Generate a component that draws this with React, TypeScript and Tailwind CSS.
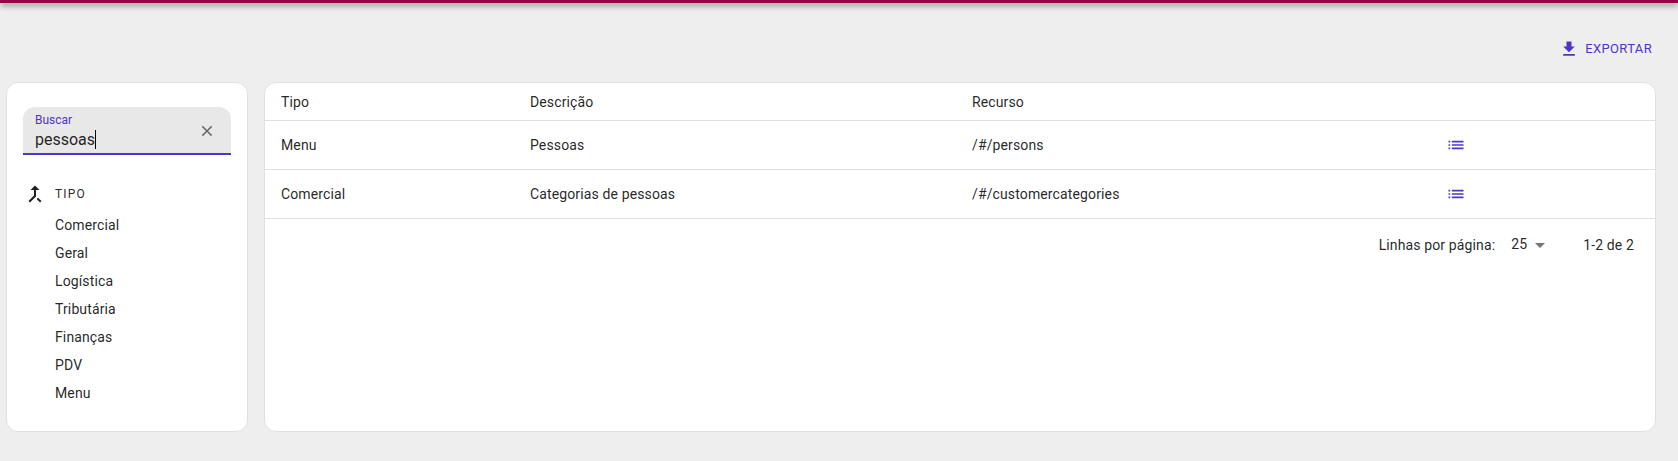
const categories = ['Comercial', 'Geral', 'Logística', 'Tributária', 'Finanças', 'PDV', 'Menu'];

const rows = [
  { tipo: 'Menu', descricao: 'Pessoas', recurso: '/#/persons' },
  { tipo: 'Comercial', descricao: 'Categorias de pessoas', recurso: '/#/customercategories' },
];

const Icon = ({ d, className }: { d: string; className: string }) => (
  <svg viewBox="0 0 24 24" fill="currentColor" className={className}>
    <path d={d} />
  </svg>
);

const DOWNLOAD = 'M19 9h-4V3H9v6H5l7 7 7-7zM5 18v2h14v-2H5z';
const CLOSE = 'M19 6.41 17.59 5 12 10.59 6.41 5 5 6.41 10.59 12 5 17.59 6.41 19 12 13.41 17.59 19 19 17.59 13.41 12z';
const MERGE = 'M17 20.41 18.41 19 15 15.59 13.59 17 17 20.41zM7.5 8H11v5.59L5.59 19 7 20.41l6-6V8h3.5L12 3.5 7.5 8z';
const LIST = 'M3 13h2v-2H3v2zm0 4h2v-2H3v2zm0-8h2V7H3v2zm4 4h14v-2H7v2zm0 4h14v-2H7v2zM7 7v2h14V7H7z';

export default function App() {
  return (
    <div className="h-[461px] w-[1678px] overflow-hidden bg-[#eeeeee] font-['Roboto',sans-serif] text-[14px] leading-[20px] tracking-[0.13px] text-[#000000de]">
      <div className="h-[3px] bg-[#8e0a45] shadow-[0_2px_6px_rgba(0,0,0,0.6)]" />

      <div className="flex h-[79px] items-start justify-end pr-[26px] pt-[33px]">
        <button className="flex h-[26px] items-center gap-[6px] text-[13px] tracking-[0.35px] text-[#5035c4]">
          <Icon d={DOWNLOAD} className="h-[20px] w-[20px]" />
          <span>EXPORTAR</span>
        </button>
      </div>

      <div className="flex h-[350px] gap-[16px] pl-[6px] pr-[22px]">
        <aside className="w-[242px] rounded-[12px] border border-[#e0e0e0] bg-white px-[16px] pt-[24px]">
          <div className="relative h-[48px] w-[208px] rounded-t-[12px] border-b-2 border-[#5035c4] bg-[#e8e8e8] pl-[12px] pt-[6px]">
            <div className="text-[12px] leading-[14px] tracking-normal text-[#5035c4]">Buscar</div>
            <div className="mt-[2px] flex items-center text-[16px] leading-[21px] tracking-normal">
              <span>pessoas</span>
              <span className="h-[19px] w-px bg-black" />
            </div>
            <Icon d={CLOSE} className="absolute right-[16px] top-[16px] h-[16px] w-[16px] scale-[1.1] text-[#666666]" />
          </div>

          <div className="mt-[29px] flex items-center">
            <Icon d={MERGE} className="ml-[3px] h-[18px] w-[18px] scale-[1.35] text-[#212121]" />
            <span className="ml-[11px] text-[12px] tracking-[1.2px]">TIPO</span>
          </div>
          <ul className="mt-[7px] pl-[32px]">
            {categories.map((c) => (
              <li key={c} className="flex h-[28px] items-center">
                {c}
              </li>
            ))}
          </ul>
        </aside>

        <main className="flex-1 rounded-[12px] border border-[#e0e0e0] bg-white">
          <div className="flex h-[38px] items-center border-b border-[#e0e0e0]">
            <div className="w-[249px] pl-[16px]">Tipo</div>
            <div className="w-[442px] pl-[16px]">Descrição</div>
            <div className="pl-[16px]">Recurso</div>
          </div>
          {rows.map((r) => (
            <div key={r.tipo} className="flex h-[49px] items-center border-b border-[#e0e0e0]">
              <div className="w-[249px] pl-[16px]">{r.tipo}</div>
              <div className="w-[442px] pl-[16px]">{r.descricao}</div>
              <div className="w-[491px] pl-[16px]">{r.recurso}</div>
              <Icon d={LIST} className="ml-[-1px] h-[20px] w-[20px] text-[#5035c4]" />
            </div>
          ))}
          <div className="flex h-[52px] items-center justify-end pr-[21px]">
            <span>Linhas por página:</span>
            <span className="ml-[16px] -mt-[2px]">25</span>
            <svg viewBox="0 0 24 24" fill="currentColor" className="ml-[1px] h-[24px] w-[24px] text-[#757575]">
              <path d="m7 10 5 5 5-5z" />
            </svg>
            <span className="ml-[31px]">1-2 de 2</span>
          </div>
        </main>
      </div>
    </div>
  );
}
